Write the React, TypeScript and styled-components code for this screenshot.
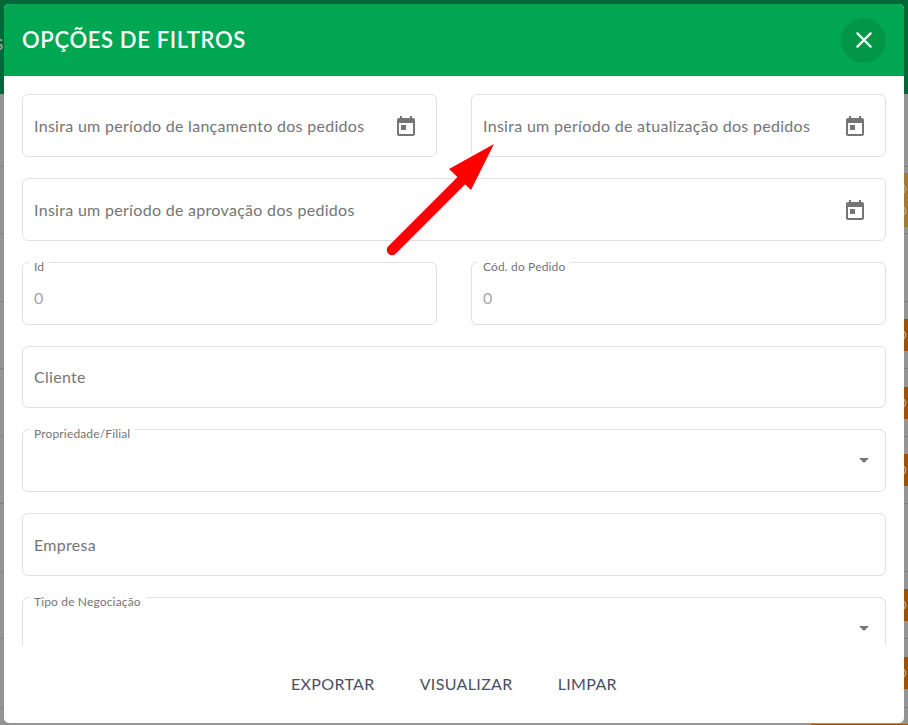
import React from "react";
import styled, { createGlobalStyle } from "styled-components";

const GlobalStyle = createGlobalStyle`
  html, body {
    margin: 0;
    padding: 0;
    height: 725px;
    overflow: hidden;
    background: #949494;
  }
  * {
    box-sizing: border-box;
  }
  body {
    font-family: "Lato", "Noto Sans", sans-serif;
  }
`;

/* page behind the dialog, dimmed */
const Page = styled.div`
  position: relative;
  height: 725px;
  overflow: hidden;
  background: #949494;
`;

const TopBar = styled.div`
  height: 94px;
  background: #006837;
  color: #a9a9a9;
  font-size: 15px;
  padding-top: 35px;
  margin-left: -5px;
`;

const BackRows = styled.div`
  display: flex;
  flex-direction: column;
`;

const BackRow = styled.div<{ $height: number }>`
  height: ${(props) => props.$height}px;
  flex-shrink: 0;
  border-bottom: 1px solid #808080;
  display: flex;
  align-items: center;
  justify-content: flex-end;
`;

const Badge = styled.div<{ $amber?: boolean }>`
  width: 97px;
  height: ${(props) => (props.$amber ? 54 : 32)}px;
  display: flex;
  flex-direction: column;
  align-items: flex-end;
  justify-content: center;
  gap: 8px;
  padding-right: 1px;
  color: #b9a98c;
  font-size: 13px;
  line-height: 14px;
  background: ${(props) => (props.$amber ? "#a37b2d" : "#a34f00")};
`;

/* dialog */
const Modal = styled.div`
  position: absolute;
  left: 4px;
  top: 4px;
  width: 900px;
  height: 719px;
  display: flex;
  flex-direction: column;
  background: #fff;
  border-radius: 5px;
  overflow: hidden;
`;

const Header = styled.header`
  height: 72px;
  flex-shrink: 0;
  display: flex;
  align-items: center;
  justify-content: space-between;
  padding: 0 18px;
  background: #00a651;
`;

const Title = styled.h2`
  margin: 0;
  color: #fff;
  font-size: 22px;
  font-weight: 600;
  letter-spacing: 0.65px;
  line-height: 1;
`;

const CloseButton = styled.button`
  width: 45px;
  height: 45px;
  padding: 0;
  border: none;
  border-radius: 50%;
  display: flex;
  align-items: center;
  justify-content: center;
  background: #029748;
  cursor: pointer;
`;

const Body = styled.div`
  flex: 1;
  min-height: 0;
  overflow: hidden;
  padding: 18px 18px 0;
  display: flex;
  flex-direction: column;
  gap: 21px;
`;

const TwoColumns = styled.div`
  display: grid;
  grid-template-columns: 415px 415px;
  column-gap: 34px;
`;

const Field = styled.div`
  position: relative;
  flex-shrink: 0;
  height: 62.85px;
  padding: 0 18px 0 11px;
  display: flex;
  align-items: center;
  justify-content: space-between;
  border: 1px solid #e0e0e0;
  border-radius: 6px;
`;

const Placeholder = styled.span`
  font-size: 16px;
  letter-spacing: 0.3px;
  color: #757575;
`;

const NumberValue = styled.span`
  margin-top: 8px;
  font-size: 16px;
  color: #a6a6a6;
`;

const FloatLabel = styled.label`
  position: absolute;
  left: 6px;
  top: -4px;
  padding: 0 5px;
  background: #fff;
  color: #757575;
  font-size: 12px;
  line-height: 15px;
  letter-spacing: 0.15px;
`;

const FieldIcon = styled.svg`
  width: 24px;
  height: 24px;
  margin-top: 3px;
  fill: #757575;
  flex-shrink: 0;
`;

const SelectArrow = styled.svg`
  position: absolute;
  right: 9px;
  top: 18px;
  width: 24px;
  height: 24px;
  fill: #757575;
`;

const Footer = styled.footer`
  height: 77px;
  flex-shrink: 0;
  display: flex;
  align-items: center;
  justify-content: center;
  gap: 45px;
  padding-bottom: 3px;
`;

const FooterButton = styled.button`
  padding: 0;
  border: none;
  background: none;
  color: #4a4f63;
  font-family: inherit;
  font-size: 16px;
  font-weight: 400;
  letter-spacing: 0.35px;
  cursor: pointer;
`;

const ArrowOverlay = styled.svg`
  position: absolute;
  left: 380px;
  top: 140px;
  width: 120px;
  height: 120px;
`;

const CalendarIcon = () => (
  <FieldIcon viewBox="0 0 24 24">
    <path d="M19 3h-1V1h-2v2H8V1H6v2H5c-1.11 0-1.99.9-1.99 2L3 19c0 1.1.89 2 2 2h14c1.1 0 2-.9 2-2V5c0-1.1-.9-2-2-2zm0 16H5V8h14v11zM7 10h5v5H7z" />
  </FieldIcon>
);

const DropArrow = () => (
  <SelectArrow viewBox="0 0 24 24">
    <path d="M7 10l5 5 5-5z" />
  </SelectArrow>
);

const backRows: { height: number; badge?: string[]; amber?: boolean }[] = [
  { height: 73 },
  { height: 67, badge: ["D", "O"], amber: true },
  { height: 68 },
  { height: 67, badge: ["O"] },
  { height: 68, badge: ["O"] },
  { height: 67, badge: ["O"] },
  { height: 68 },
  { height: 67, badge: ["O"] },
  { height: 69, badge: ["O"] },
  { height: 64, badge: [] },
];

const App: React.FC = () => {
  return (
    <>
      <GlobalStyle />
      <Page>
        <TopBar>S</TopBar>
        <BackRows>
          {backRows.map((row, index) => (
            <BackRow key={index} $height={row.height}>
              {row.badge && (
                <Badge $amber={row.amber}>
                  {row.badge.map((glyph) => (
                    <span key={glyph}>{glyph}</span>
                  ))}
                </Badge>
              )}
            </BackRow>
          ))}
        </BackRows>
        <Modal>
          <Header>
            <Title>OPÇÕES DE FILTROS</Title>
            <CloseButton aria-label="Fechar">
              <svg width="28" height="28" viewBox="0 0 24 24" fill="#e6f2ea">
                <path d="M19 6.41L17.59 5 12 10.59 6.41 5 5 6.41 10.59 12 5 17.59 6.41 19 12 13.41 17.59 19 19 17.59 13.41 12z" />
              </svg>
            </CloseButton>
          </Header>
          <Body>
            <TwoColumns>
              <Field>
                <Placeholder>Insira um período de lançamento dos pedidos</Placeholder>
                <CalendarIcon />
              </Field>
              <Field>
                <Placeholder>Insira um período de atualização dos pedidos</Placeholder>
                <CalendarIcon />
              </Field>
            </TwoColumns>
            <Field>
              <Placeholder>Insira um período de aprovação dos pedidos</Placeholder>
              <CalendarIcon />
            </Field>
            <TwoColumns>
              <Field>
                <FloatLabel>Id</FloatLabel>
                <NumberValue>0</NumberValue>
              </Field>
              <Field>
                <FloatLabel>Cód. do Pedido</FloatLabel>
                <NumberValue>0</NumberValue>
              </Field>
            </TwoColumns>
            <Field>
              <Placeholder>Cliente</Placeholder>
            </Field>
            <Field>
              <FloatLabel>Propriedade/Filial</FloatLabel>
              <DropArrow />
            </Field>
            <Field>
              <Placeholder>Empresa</Placeholder>
            </Field>
            <Field>
              <FloatLabel>Tipo de Negociação</FloatLabel>
              <DropArrow />
            </Field>
          </Body>
          <Footer>
            <FooterButton>EXPORTAR</FooterButton>
            <FooterButton>VISUALIZAR</FooterButton>
            <FooterButton>LIMPAR</FooterButton>
          </Footer>
        </Modal>
        <ArrowOverlay viewBox="380 140 120 120">
          <line x1="392" y1="250" x2="462" y2="180" stroke="#ff0000" strokeWidth="10.5" strokeLinecap="round" />
          <polygon points="494,144 449,169 471,190" fill="#ff0000" />
        </ArrowOverlay>
      </Page>
    </>
  );
};

export default App;
